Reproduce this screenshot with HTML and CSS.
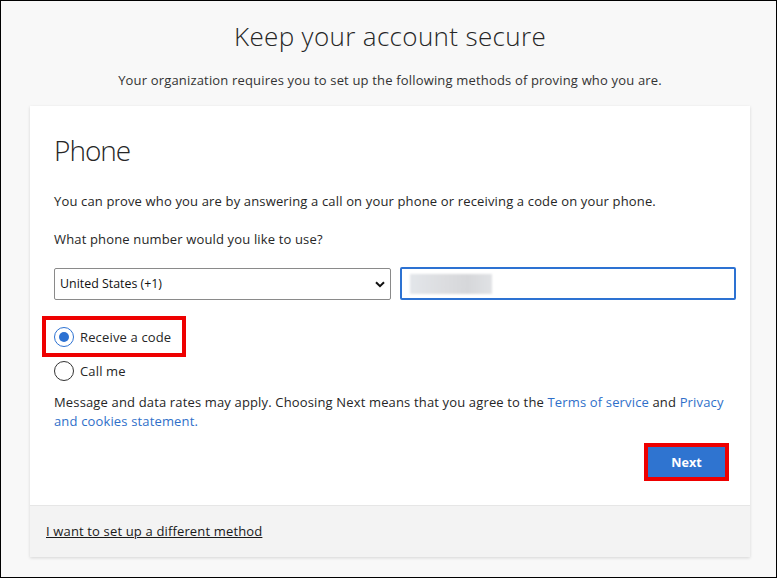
FILE: index.html
```html
<!DOCTYPE html>
<html>
<head>
<meta charset="utf-8">
<link rel="stylesheet" href="styles.css">
</head>
<body>
<div class="frame">
  <h1 class="title">Keep your account secure</h1>
  <p class="subtitle">Your organization requires you to set up the following methods of proving who you are.</p>
  <div class="card">
    <div class="card-body">
      <h2 class="heading">Phone</h2>
      <p class="text intro">You can prove who you are by answering a call on your phone or receiving a code on your phone.</p>
      <p class="text question">What phone number would you like to use?</p>
      <div class="inputs">
        <div class="select">
          <span>United States (+1)</span>
          <svg class="chev" width="10" height="7" viewBox="0 0 10 7"><path d="M1 1.2 L5 5.2 L9 1.2" fill="none" stroke="#111" stroke-width="2"/></svg>
        </div>
        <div class="phone-input"><span class="blur"></span></div>
      </div>
      <div class="options">
        <div class="highlight">
          <label class="radio"><span class="circle checked"><span class="dot"></span></span><span>Receive a code</span></label>
        </div>
        <label class="radio plain"><span class="circle"></span><span>Call me</span></label>
      </div>
      <p class="text legal">Message and data rates may apply. Choosing Next means that you agree to the <a class="lnk">Terms of service</a> and <a class="lnk">Privacy and cookies statement.</a></p>
      <div class="actions">
        <div class="btn-highlight"><button class="next">Next</button></div>
      </div>
    </div>
    <div class="card-footer">
      <a class="alt">I want to set up a different method</a>
    </div>
  </div>
</div>
</body>
</html>
```
FILE: styles.css
```css
* { box-sizing: border-box; }
html, body { margin: 0; padding: 0; }
body {
  width: 777px;
  height: 578px;
  font-family: "Open Sans", "Noto Sans", sans-serif;
  color: #262626;
  overflow: hidden;
}
.frame {
  width: 777px;
  height: 578px;
  border: 1px solid #000;
  background: #f8f8f8;
  padding: 0 26px 0 29px;
}
.title {
  margin: 17px 0 0;
  text-align: center;
  font-weight: 300;
  font-size: 26px;
  line-height: 36px;
  color: #262626;
  letter-spacing: 0.35px;
}
.subtitle {
  margin: 16px 0 0;
  text-align: center;
  font-size: 13px;
  letter-spacing: 0.17px;
  line-height: 20px;
  color: #333;
}
.card {
  margin-top: 16px;
  background: #fff;
  box-shadow: 0 1px 3px rgba(0,0,0,0.14);
  width: 720px;
}
.card-body {
  padding: 25px 14px 24px 24px;
}
.heading {
  margin: 0;
  font-weight: 300;
  font-size: 28px;
  letter-spacing: -1px;
  line-height: 38px;
  color: #262626;
}
.text {
  margin: 0;
  font-size: 13px;
  letter-spacing: 0.15px;
  line-height: 19px;
  color: #262626;
}
.intro { margin-top: 23px; }
.question { margin-top: 19px; }
.inputs {
  margin-top: 18px;
  display: flex;
  gap: 9px;
  align-items: center;
}
.select {
  width: 337px;
  height: 32px;
  border: 1px solid #8a8a8a;
  border-radius: 2px;
  display: flex;
  align-items: center;
  justify-content: space-between;
  padding: 0 5px 0 5px;
  font-size: 12.4px;
  color: #111;
}
.chev { margin-top: 1px; }
.phone-input {
  width: 336px;
  height: 33px;
  border: 2px solid #2d72d2;
  border-radius: 2px;
  padding: 4px 8px;
  display: flex;
  align-items: center;
}
.blur {
  display: block;
  width: 82px;
  height: 20px;
  background: linear-gradient(90deg, #e3e6ea 0%, #dcdde0 40%, #d6d7da 70%, #e0e2e5 100%);
  filter: blur(1px);
}
.options {
  margin-top: 16px;
  margin-left: -12px;
}
.highlight {
  display: inline-flex;
  border: 4px solid #ee0000;
  padding: 7px 11px 6px 8px;
}
.radio {
  display: flex;
  align-items: center;
  gap: 6px;
  font-size: 13px;
  letter-spacing: 0.15px;
  color: #262626;
  line-height: 20px;
}
.plain { margin-top: 4px; margin-left: 12px; }
.circle {
  width: 20px;
  height: 20px;
  border-radius: 50%;
  border: 1px solid #333;
  display: flex;
  align-items: center;
  justify-content: center;
  background: #fff;
}
.circle.checked { border-color: #2d72d2; }
.dot {
  width: 10px;
  height: 10px;
  border-radius: 50%;
  background: #2d72d2;
}
.legal { margin-top: 12px; }
.lnk { color: #2f6fc9; text-decoration: none; }
.actions {
  display: flex;
  justify-content: flex-end;
  margin-top: 12px;
  padding-right: 7px;
}
.btn-highlight {
  border: 4px solid #ee0000;
}
.next {
  display: block;
  width: 77px;
  height: 30px;
  background: #2f74d0;
  border: none;
  color: #fff;
  font-family: "Open Sans", "Noto Sans", sans-serif;
  font-weight: 700;
  font-size: 12.6px;
  padding: 0;
}
.card-footer {
  background: #f3f3f3;
  border-top: 1px solid #e6e6e6;
  height: 52px;
  padding: 13px 16px 0 16px;
}
.alt {
  font-size: 13px;
  letter-spacing: 0.15px;
  line-height: 20px;
  color: #1a1a1a;
  text-decoration: underline;
}
```
